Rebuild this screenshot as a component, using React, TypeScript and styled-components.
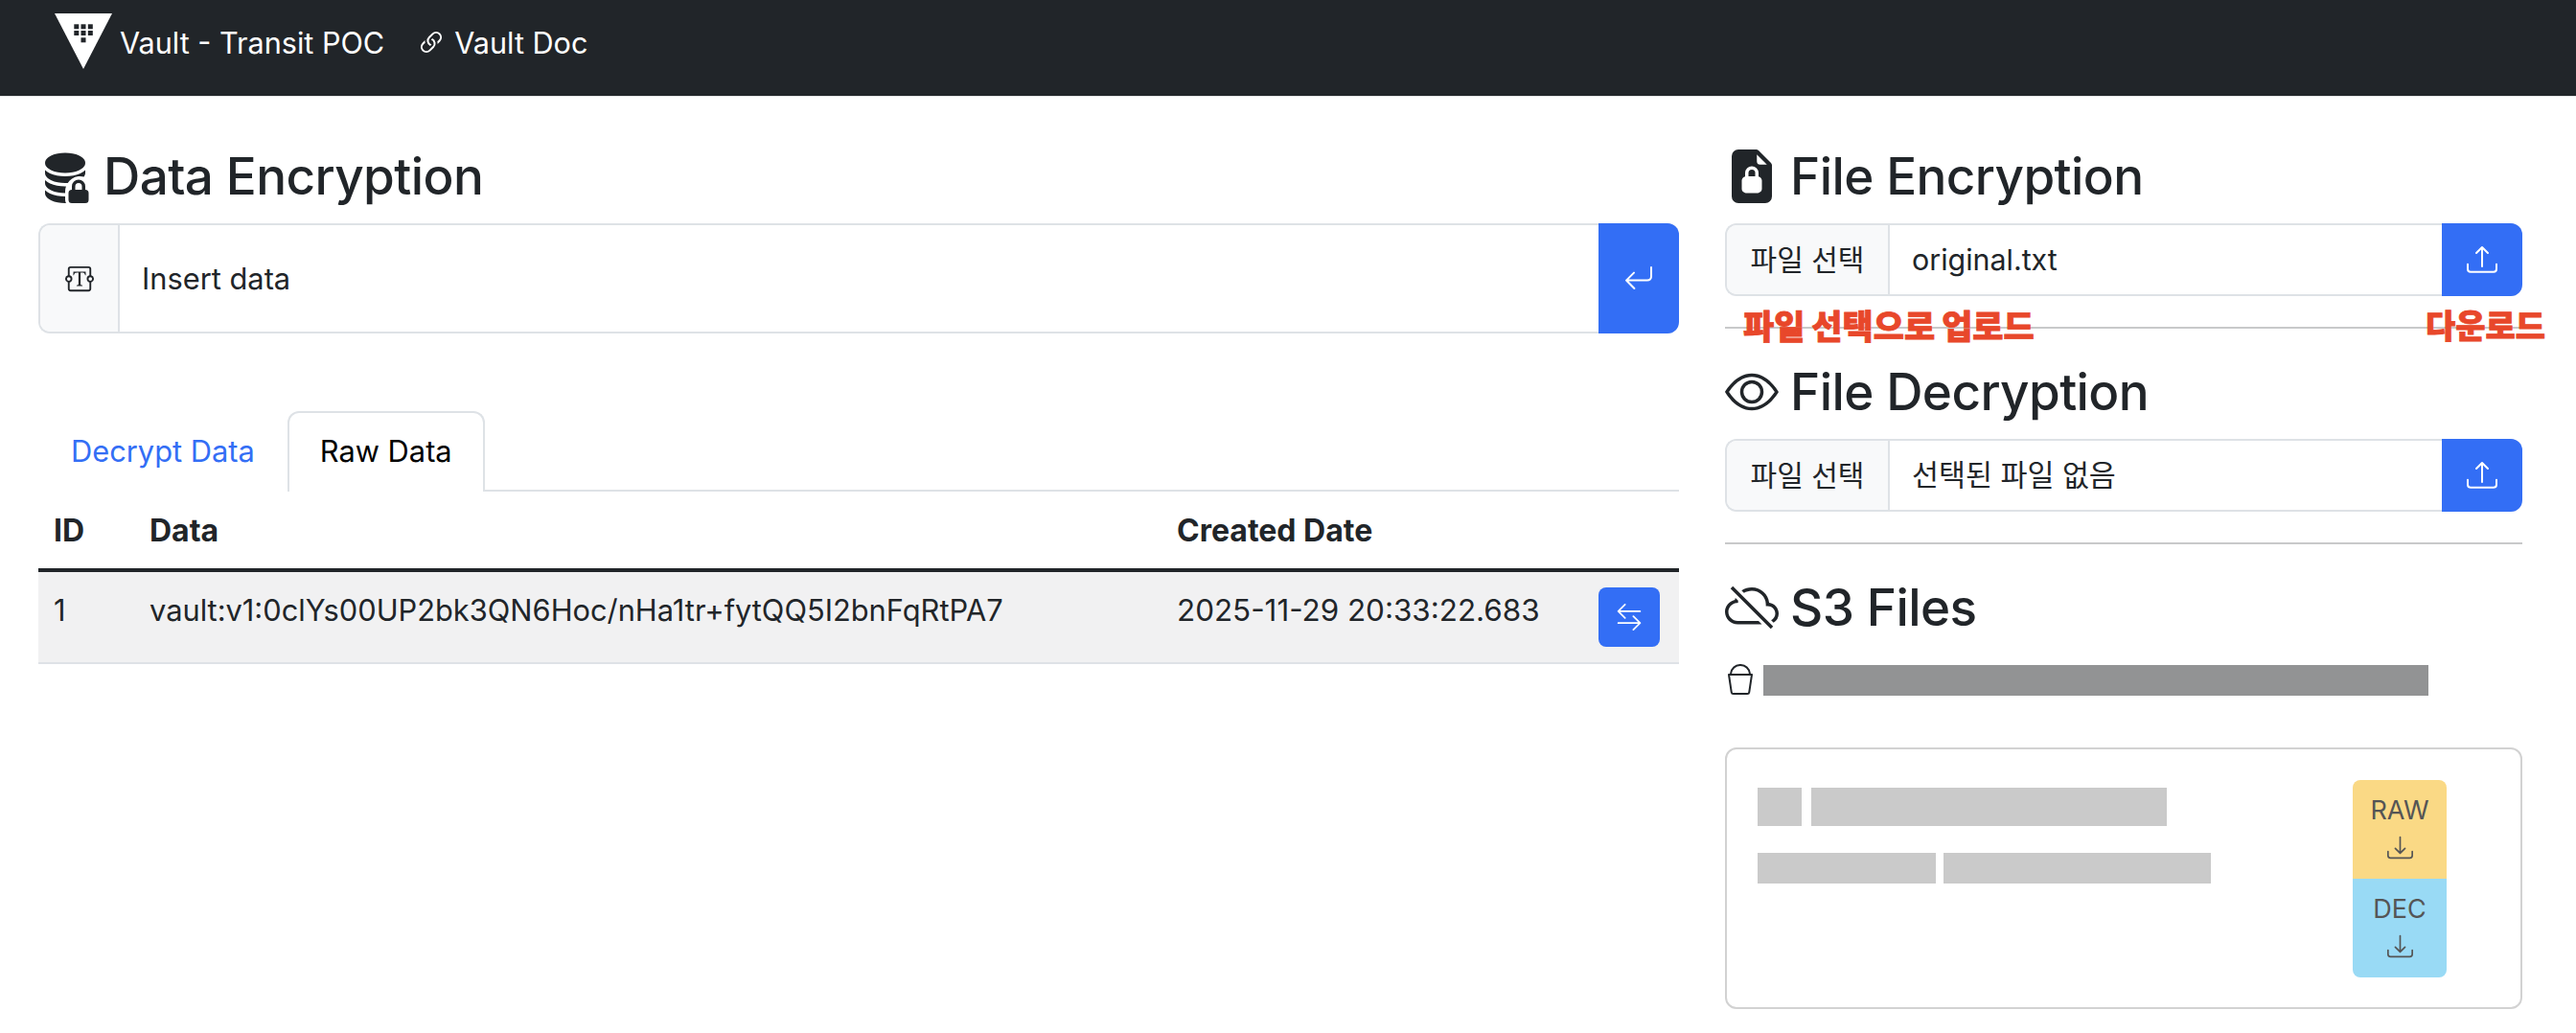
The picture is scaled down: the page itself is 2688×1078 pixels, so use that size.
import React from 'react';
import styled, { createGlobalStyle } from 'styled-components';
import {
  BsArrowLeftRight,
  BsArrowReturnLeft,
  BsBucket,
  BsCloudSlash,
  BsDatabaseFillLock,
  BsDownload,
  BsEye,
  BsFileEarmarkLock2Fill,
  BsLink45Deg,
  BsTextareaT,
  BsUpload,
} from 'react-icons/bs';

const GlobalStyle = createGlobalStyle`
  html, body {
    margin: 0;
    padding: 0;
    background: #fff;
    color: #212529;
    font-family: Inter, "Noto Sans CJK KR", sans-serif;
    font-size: 30.8px;
    line-height: 48px;
  }
  * { box-sizing: border-box; }
`;

const Navbar = styled.nav`
  height: 101px;
  padding: 0 0 12px 57px;
  background: #212529;
  border-bottom: 1px solid #e4e5e6;
  display: flex;
  align-items: flex-start;
  color: #fff;
  font-size: 30.6px;
`;

const Brand = styled.a`
  display: flex;
  align-items: flex-start;
  padding-top: 14px;
  gap: 8px;
  margin-right: 33px;
  span { margin-top: 7px; }
`;

const NavLink = styled.a`
  display: flex;
  align-items: center;
  gap: 8px;
  height: 48px;
  margin-top: 21px;
  svg { font-size: 32px; }
`;

const Page = styled.main`
  display: grid;
  grid-template-columns: 1712px 832px;
  column-gap: 48px;
  padding: 49px 56px 0 40px;
`;

const Heading = styled.h3`
  display: flex;
  align-items: center;
  gap: 12px;
  margin: 0 0 16px;
  height: 67px;
  padding-top: 2px;
  font-size: 53px;
  font-weight: 500;
  letter-spacing: -0.6px;
  line-height: 65px;
  svg { font-size: 56px; flex: none; margin-top: -2px; }
`;

const InputGroup = styled.div<{ $tall?: boolean }>`
  display: flex;
  height: ${p => (p.$tall ? 115 : 76)}px;
  border: 2px solid #dee2e6;
  border-right: 0;
  border-radius: 12px;
`;

const Addon = styled.div<{ $w: number }>`
  display: flex;
  align-items: center;
  justify-content: center;
  width: ${p => p.$w}px;
  flex: none;
  background: #f8f9fa;
  border-right: 2px solid #dee2e6;
  border-radius: 10px 0 0 10px;
  font-size: 30px;
`;

const Field = styled.div<{ $small?: boolean }>`
  flex: 1;
  display: flex;
  align-items: center;
  padding-left: 23px;
  font-size: ${p => (p.$small ? 30.4 : 30.8)}px;
`;

const ActionButton = styled.button`
  width: 84px;
  margin: -2px 0;
  flex: none;
  border: 0;
  padding: 0;
  display: flex;
  align-items: center;
  justify-content: center;
  background: #336ef5;
  color: #fff;
  border-radius: 0 12px 12px 0;
  font-size: 32px;
`;

const Tabs = styled.div`
  display: flex;
  margin-top: 81px;
  border-bottom: 2px solid #dee2e6;
  height: 84px;
`;

const Tab = styled.a<{ $active?: boolean }>`
  padding: 16px 32px;
  border: 2px solid ${p => (p.$active ? '#dee2e6' : 'transparent')};
  border-bottom: 0;
  border-radius: 12px 12px 0 0;
  height: 84px;
  background: #fff;
  color: ${p => (p.$active ? '#000' : '#336ef5')};
`;

const Table = styled.table`
  width: 100%;
  table-layout: fixed;
  border-collapse: collapse;
  th, td { padding: 16px; text-align: left; vertical-align: top; }
  th { font-weight: 700; font-size: 32px; padding: 17px 16px 15px; border-bottom: 4px solid #212529; }
  td { background: #f1f1f2; border-bottom: 2px solid #dee2e6; }
`;

const DateText = styled.span`
  font-size: 31.4px;
  white-space: nowrap;
`;

const SwapButton = styled.button`
  width: 64px;
  height: 62px;
  border: 0;
  padding: 0;
  display: flex;
  align-items: center;
  justify-content: center;
  background: #336ef5;
  color: #fff;
  border-radius: 8px;
  font-size: 28px;
`;

const Divider = styled.div`
  position: relative;
  height: 2px;
  margin: 32px 0;
  background: #c8c9ca;
`;

const Note = styled.span<{ $left: number; $size: number }>`
  position: absolute;
  left: ${p => p.$left}px;
  top: -20px;
  white-space: nowrap;
  color: #e8472a;
  font-size: ${p => p.$size}px;
  line-height: 40px;
  font-weight: 900;
  letter-spacing: 0;
  -webkit-text-stroke: 0.8px #e8472a;
`;

const BucketRow = styled.div`
  display: flex;
  align-items: center;
  gap: 8px;
  height: 32px;
  margin: 27px 0 54px;
  svg { font-size: 32px; flex: none; margin-top: -3px; }
`;

const Redacted = styled.div<{ $w: number; $h: number; $dark?: boolean }>`
  width: ${p => p.$w}px;
  height: ${p => p.$h}px;
  background: ${p => (p.$dark ? '#929394' : '#cacaca')};
  flex: none;
`;

const FileCard = styled.div`
  height: 273px;
  border: 2px solid #d2d2d2;
  border-radius: 12px;
  padding: 32px 77px 0 32px;
  display: flex;
  justify-content: space-between;
  align-items: flex-start;
`;

const RedactedRows = styled.div`
  display: flex;
  flex-direction: column;
  gap: 28px;
  padding-top: 8px;
`;

const RedactedRow = styled.div<{ $gap: number }>`
  display: flex;
  gap: ${p => p.$gap}px;
`;

const DownloadStack = styled.div`
  display: flex;
  flex-direction: column;
  width: 98px;
`;

const DownloadButton = styled.div<{ $bg: string; $top?: boolean }>`
  height: 103px;
  display: flex;
  flex-direction: column;
  align-items: center;
  padding-top: 8px;
  background: ${p => p.$bg};
  color: #555;
  font-size: 27px;
  line-height: 48px;
  border-radius: ${p => (p.$top ? '8px 8px 0 0' : '0 0 8px 8px')};
  svg { font-size: 27px; margin-top: 1px; }
`;

const FileInput = ({ value }: { value: string }) => (
  <InputGroup>
    <Addon $w={170}>파일 선택</Addon>
    <Field $small>{value}</Field>
    <ActionButton><BsUpload /></ActionButton>
  </InputGroup>
);

const VaultLogo = () => (
  <svg width="60" height="58" viewBox="0 0 60 58">
    <path d="M0 0h60L30 58z" fill="#fff" />
    <g fill="#212529">
      <rect x="20.3" y="11.3" width="5" height="5" />
      <rect x="27.5" y="11.3" width="5" height="5" />
      <rect x="34.8" y="11.3" width="5" height="5" />
      <rect x="20.3" y="18" width="5" height="5" />
      <rect x="27.5" y="18" width="5" height="5" />
      <rect x="34.8" y="18" width="5" height="5" />
      <rect x="27.5" y="25.3" width="5" height="5" />
    </g>
  </svg>
);

const App = () => (
  <>
    <GlobalStyle />
    <Navbar>
      <Brand>
        <VaultLogo />
        <span>Vault - Transit POC</span>
      </Brand>
      <NavLink><BsLink45Deg />Vault Doc</NavLink>
    </Navbar>
    <Page>
      <section>
        <Heading><BsDatabaseFillLock />Data Encryption</Heading>
        <InputGroup $tall>
          <Addon $w={83}><BsTextareaT /></Addon>
          <Field>Insert data</Field>
          <ActionButton><BsArrowReturnLeft /></ActionButton>
        </InputGroup>
        <Tabs>
          <Tab>Decrypt Data</Tab>
          <Tab $active>Raw Data</Tab>
        </Tabs>
        <Table>
          <colgroup>
            <col style={{ width: 100 }} />
            <col style={{ width: 1072 }} />
            <col style={{ width: 440 }} />
            <col style={{ width: 100 }} />
          </colgroup>
          <thead>
            <tr><th>ID</th><th>Data</th><th>Created Date</th><th /></tr>
          </thead>
          <tbody>
            <tr>
              <td>1</td>
              <td>vault:v1:0clYs00UP2bk3QN6Hoc/nHa1tr+fytQQ5I2bnFqRtPA7</td>
              <td><DateText>2025-11-29 20:33:22.683</DateText></td>
              <td><SwapButton><BsArrowLeftRight /></SwapButton></td>
            </tr>
          </tbody>
        </Table>
      </section>
      <section>
        <Heading><BsFileEarmarkLock2Fill />File Encryption</Heading>
        <FileInput value="original.txt" />
        <Divider>
          <Note $left={19} $size={35}>파일 선택으로 업로드</Note>
          <Note $left={731} $size={34}>다운로드</Note>
        </Divider>
        <Heading><BsEye />File Decryption</Heading>
        <FileInput value="선택된 파일 없음" />
        <Divider />
        <Heading><BsCloudSlash />S3 Files</Heading>
        <BucketRow>
          <BsBucket />
          <Redacted $w={694} $h={32} $dark />
        </BucketRow>
        <FileCard>
          <RedactedRows>
            <RedactedRow $gap={10}>
              <Redacted $w={46} $h={40} />
              <Redacted $w={371} $h={40} />
            </RedactedRow>
            <RedactedRow $gap={8}>
              <Redacted $w={186} $h={32} />
              <Redacted $w={279} $h={32} />
            </RedactedRow>
          </RedactedRows>
          <DownloadStack>
            <DownloadButton $bg="#fad985" $top>RAW<BsDownload /></DownloadButton>
            <DownloadButton $bg="#99daf5">DEC<BsDownload /></DownloadButton>
          </DownloadStack>
        </FileCard>
      </section>
    </Page>
  </>
);

export default App;
